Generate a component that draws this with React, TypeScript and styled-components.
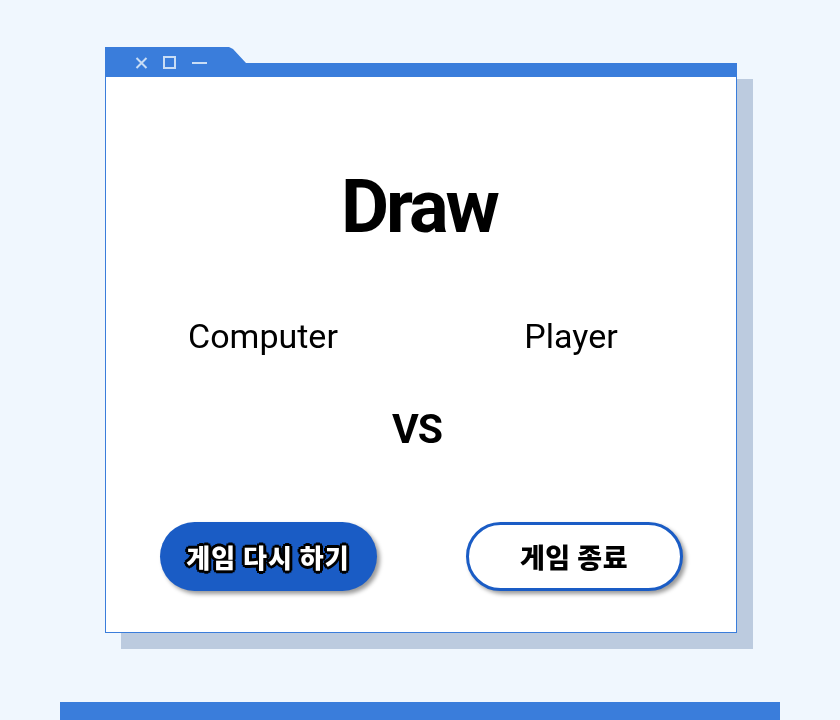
import React from "react";
import styled, { createGlobalStyle } from "styled-components";

const Global = createGlobalStyle`
  html, body { margin: 0; padding: 0; background: #f0f7fe; overflow: hidden; }
  body { font-family: Roboto, "Noto Sans CJK KR", sans-serif; }
`;

const Page = styled.div`
  height: 720px;
  padding-top: 47px;
  box-sizing: border-box;
  display: flex;
  flex-direction: column;
`;

const Window = styled.div`
  margin-left: 105px;
  width: 632px;
  display: flex;
  flex-direction: column;
  filter: drop-shadow(16px 16px 0 #bccbdf);
`;

const TitleBar = styled.div`
  height: 30px;
  background: #3a7ddb;
  clip-path: polygon(0 0, 124px 0, 128px 2px, 141px 16px, 100% 16px, 100% 100%, 0 100%);
  display: flex;
  align-items: flex-start;
  padding: 10px 0 0 30px;
  box-sizing: border-box;
  gap: 15px;
`;

const IconBox = styled.svg`
  display: block;
  flex: none;
`;

const Body = styled.div`
  height: 556px;
  box-sizing: border-box;
  background: #fff;
  border: 1px solid #3a7ddb;
  border-top: none;
  display: flex;
  flex-direction: column;
  align-items: center;
  padding-top: 93px;
`;

const Title = styled.h1`
  margin: 0 0 0 -4px;
  font-family: Roboto, sans-serif;
  font-weight: 700;
  font-size: 74px;
  line-height: 1;
  letter-spacing: -3px;
  color: #000;
`;

const Grid = styled.div`
  display: grid;
  grid-template-columns: 308px 308px;
  justify-items: center;
  margin-left: -8px;
`;

const Name = styled.div`
  font-family: Roboto, sans-serif;
  font-weight: 400;
  font-size: 34px;
  line-height: 1;
  color: #000;
`;

const NameRow = styled(Grid)`
  margin-top: 75px;
`;

const Versus = styled.div`
  margin-top: 56px;
  font-family: Roboto, sans-serif;
  font-weight: 700;
  font-size: 41px;
  line-height: 1;
  letter-spacing: -1px;
  color: #000;
  margin-left: -8px;
`;

const ButtonRow = styled(Grid)`
  margin-top: 72px;
  margin-left: 0;
  grid-template-columns: 306px 306px;
`;

const Button = styled.button<{ $primary?: boolean }>`
  width: 217px;
  height: 69px;
  border-radius: 35px;
  box-sizing: border-box;
  border: ${(p) => (p.$primary ? "none" : "3px solid #1a5cc5")};
  background: ${(p) => (p.$primary ? "#1a5cc5" : "#ffffff")};
  box-shadow: 3px 3px 4px rgba(0, 0, 0, 0.4);
  font-family: "Noto Sans CJK KR", sans-serif;
  font-weight: 900;
  font-size: ${(p) => (p.$primary ? "26px" : "27px")};
  line-height: 1;
  color: ${(p) => (p.$primary ? "#ffffff" : "#000000")};
  letter-spacing: ${(p) => (p.$primary ? "1px" : "0.5px")};
  text-shadow: ${(p) =>
    p.$primary
      ? "2px 0 0 #000, -2px 0 0 #000, 0 2px 0 #000, 0 -2px 0 #000, 2px 2px 0 #000, -2px -2px 0 #000, 2px -2px 0 #000, -2px 2px 0 #000, 3px 0 0 #000, -3px 0 0 #000, 0 3px 0 #000, 0 -3px 0 #000"
      : "none"};
  padding: 0;
  cursor: pointer;
`;

const BottomBar = styled.div`
  margin-top: 69px;
  margin-left: 60px;
  width: 720px;
  height: 30px;
  flex: none;
  background: #3a7ddb;
`;

const iconColor = "#c9ddf5";

export default function App() {
  return (
    <>
      <Global />
      <Page>
        <Window>
          <TitleBar>
            <IconBox width="13" height="12" viewBox="0 0 13 12">
              <path d="M1.5 1 L11.5 11 M11.5 1 L1.5 11" stroke={iconColor} strokeWidth="2" />
            </IconBox>
            <IconBox width="13" height="13" viewBox="0 0 13 13" style={{ marginTop: -1 }}>
              <rect x="1" y="1" width="11" height="11" fill="none" stroke={iconColor} strokeWidth="2" />
            </IconBox>
            <IconBox width="16" height="12" viewBox="0 0 16 12">
              <path d="M1 6 L16 6" stroke={iconColor} strokeWidth="2" />
            </IconBox>
          </TitleBar>
          <Body>
            <Title>Draw</Title>
            <NameRow>
              <Name>Computer</Name>
              <Name>Player</Name>
            </NameRow>
            <Versus>VS</Versus>
            <ButtonRow>
              <Button $primary>게임 다시 하기</Button>
              <Button>게임 종료</Button>
            </ButtonRow>
          </Body>
        </Window>
        <BottomBar />
      </Page>
    </>
  );
}
